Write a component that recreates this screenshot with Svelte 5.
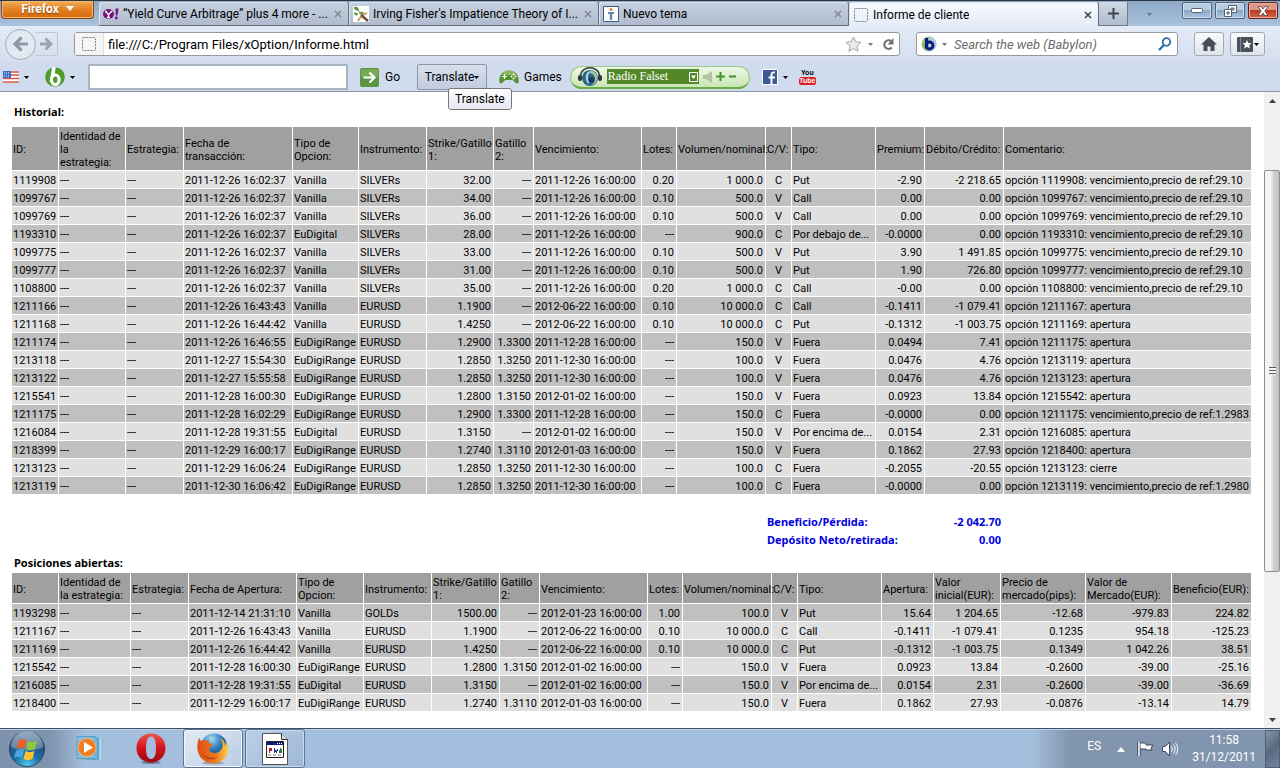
<script>
	let address = $state('file:///C:/Program Files/xOption/Informe.html');
	let station = $state('Radio Falset');

	const tabs = [
		{ title: '“Yield Curve Arbitrage” plus 4 more - ...', icon: 'yahoo' },
		{ title: "Irving Fisher's Impatience Theory of I...", icon: 'plant' },
		{ title: 'Nuevo tema', icon: 'person' },
		{ title: 'Informe de cliente', icon: 'blank', active: true }
	];

	// name, width, alignment; the last column takes what is left
	const historyColumns = [
		['ID:', 46, 'right'],
		['Identidad de\nla\nestrategia:', 66],
		['Estrategia:', 57],
		['Fecha de\ntransacción:', 108],
		['Tipo de\nOpcion:', 65],
		['Instrumento:', 67],
		['Strike/Gatillo\n1:', 66, 'right'],
		['Gatillo\n2:', 39, 'right'],
		['Vencimiento:', 107],
		['Lotes:', 34, 'right'],
		['Volumen/nominal:', 88, 'right'],
		['C/V:', 25, 'center'],
		['Tipo:', 83],
		['Premium:', 48, 'right'],
		['Débito/Crédito:', 78, 'right'],
		['Comentario:', null]
	];

	const history = `1119908|---|---|2011-12-26 16:02:37|Vanilla|SILVERs|32.00|---|2011-12-26 16:00:00|0.20|1 000.0|C|Put|-2.90|-2 218.65|opción 1119908: vencimiento,precio de ref:29.10
1099767|---|---|2011-12-26 16:02:37|Vanilla|SILVERs|34.00|---|2011-12-26 16:00:00|0.10|500.0|V|Call|0.00|0.00|opción 1099767: vencimiento,precio de ref:29.10
1099769|---|---|2011-12-26 16:02:37|Vanilla|SILVERs|36.00|---|2011-12-26 16:00:00|0.10|500.0|V|Call|0.00|0.00|opción 1099769: vencimiento,precio de ref:29.10
1193310|---|---|2011-12-26 16:02:37|EuDigital|SILVERs|28.00|---|2011-12-26 16:00:00|---|900.0|C|Por debajo de...|-0.0000|0.00|opción 1193310: vencimiento,precio de ref:29.10
1099775|---|---|2011-12-26 16:02:37|Vanilla|SILVERs|33.00|---|2011-12-26 16:00:00|0.10|500.0|V|Put|3.90|1 491.85|opción 1099775: vencimiento,precio de ref:29.10
1099777|---|---|2011-12-26 16:02:37|Vanilla|SILVERs|31.00|---|2011-12-26 16:00:00|0.10|500.0|V|Put|1.90|726.80|opción 1099777: vencimiento,precio de ref:29.10
1108800|---|---|2011-12-26 16:02:37|Vanilla|SILVERs|35.00|---|2011-12-26 16:00:00|0.20|1 000.0|C|Call|-0.00|0.00|opción 1108800: vencimiento,precio de ref:29.10
1211166|---|---|2011-12-26 16:43:43|Vanilla|EURUSD|1.1900|---|2012-06-22 16:00:00|0.10|10 000.0|C|Call|-0.1411|-1 079.41|opción 1211167: apertura
1211168|---|---|2011-12-26 16:44:42|Vanilla|EURUSD|1.4250|---|2012-06-22 16:00:00|0.10|10 000.0|C|Put|-0.1312|-1 003.75|opción 1211169: apertura
1211174|---|---|2011-12-26 16:46:55|EuDigiRange|EURUSD|1.2900|1.3300|2011-12-28 16:00:00|---|150.0|V|Fuera|0.0494|7.41|opción 1211175: apertura
1213118|---|---|2011-12-27 15:54:30|EuDigiRange|EURUSD|1.2850|1.3250|2011-12-30 16:00:00|---|100.0|V|Fuera|0.0476|4.76|opción 1213119: apertura
1213122|---|---|2011-12-27 15:55:58|EuDigiRange|EURUSD|1.2850|1.3250|2011-12-30 16:00:00|---|100.0|V|Fuera|0.0476|4.76|opción 1213123: apertura
1215541|---|---|2011-12-28 16:00:30|EuDigiRange|EURUSD|1.2800|1.3150|2012-01-02 16:00:00|---|150.0|V|Fuera|0.0923|13.84|opción 1215542: apertura
1211175|---|---|2011-12-28 16:02:29|EuDigiRange|EURUSD|1.2900|1.3300|2011-12-28 16:00:00|---|150.0|C|Fuera|-0.0000|0.00|opción 1211175: vencimiento,precio de ref:1.2983
1216084|---|---|2011-12-28 19:31:55|EuDigital|EURUSD|1.3150|---|2012-01-02 16:00:00|---|150.0|V|Por encima de...|0.0154|2.31|opción 1216085: apertura
1218399|---|---|2011-12-29 16:00:17|EuDigiRange|EURUSD|1.2740|1.3110|2012-01-03 16:00:00|---|150.0|V|Fuera|0.1862|27.93|opción 1218400: apertura
1213123|---|---|2011-12-29 16:06:24|EuDigiRange|EURUSD|1.2850|1.3250|2011-12-30 16:00:00|---|100.0|C|Fuera|-0.2055|-20.55|opción 1213123: cierre
1213119|---|---|2011-12-30 16:06:42|EuDigiRange|EURUSD|1.2850|1.3250|2011-12-30 16:00:00|---|100.0|C|Fuera|-0.0000|0.00|opción 1213119: vencimiento,precio de ref:1.2980`
		.split('\n')
		.map((line) => line.split('|'));

	const totals = [
		['Beneficio/Pérdida:', '-2 042.70'],
		['Depósito Neto/retirada:', '0.00']
	];

	const openColumns = [
		['ID:', 46, 'right'],
		['Identidad de\nla estrategia:', 71],
		['Estrategia:', 57],
		['Fecha de Apertura:', 107],
		['Tipo de\nOpcion:', 66],
		['Instrumento:', 67],
		['Strike/Gatillo\n1:', 67, 'right'],
		['Gatillo\n2:', 39, 'right'],
		['Vencimiento:', 107],
		['Lotes:', 34, 'right'],
		['Volumen/nominal:', 88, 'right'],
		['C/V:', 25, 'center'],
		['Tipo:', 83],
		['Apertura:', 51, 'right'],
		['Valor\ninicial(EUR):', 66, 'right'],
		['Precio de\nmercado(pips):', 84, 'right'],
		['Valor de\nMercado(EUR):', 85, 'right'],
		['Beneficio(EUR):', null, 'right']
	];

	const openPositions = `1193298|---|---|2011-12-14 21:31:10|Vanilla|GOLDs|1500.00|---|2012-01-23 16:00:00|1.00|100.0|V|Put|15.64|1 204.65|-12.68|-979.83|224.82
1211167|---|---|2011-12-26 16:43:43|Vanilla|EURUSD|1.1900|---|2012-06-22 16:00:00|0.10|10 000.0|C|Call|-0.1411|-1 079.41|0.1235|954.18|-125.23
1211169|---|---|2011-12-26 16:44:42|Vanilla|EURUSD|1.4250|---|2012-06-22 16:00:00|0.10|10 000.0|C|Put|-0.1312|-1 003.75|0.1349|1 042.26|38.51
1215542|---|---|2011-12-28 16:00:30|EuDigiRange|EURUSD|1.2800|1.3150|2012-01-02 16:00:00|---|150.0|V|Fuera|0.0923|13.84|-0.2600|-39.00|-25.16
1216085|---|---|2011-12-28 19:31:55|EuDigital|EURUSD|1.3150|---|2012-01-02 16:00:00|---|150.0|V|Por encima de...|0.0154|2.31|-0.2600|-39.00|-36.69
1218400|---|---|2011-12-29 16:00:17|EuDigiRange|EURUSD|1.2740|1.3110|2012-01-03 16:00:00|---|150.0|V|Fuera|0.1862|27.93|-0.0876|-13.14|14.79`
		.split('\n')
		.map((line) => line.split('|'));
</script>

{#snippet arrow()}
	<svg width="5" height="3" viewBox="0 0 5 3"><path d="M0 0h5L2.5 3z" fill="currentColor" /></svg>
{/snippet}

{#snippet favicon(name)}
	<svg width="16" height="16" viewBox="0 0 16 16">
		{#if name === 'yahoo'}
			<ellipse cx="5.5" cy="8" rx="5.5" ry="5" fill="#7b0f80" />
			<path d="M2.5 5.5l3 3 3-3M5.5 8.5v3M4 11.5h3M2 5.5h2M7.500 5.500h2" stroke="#fff" stroke-width="1.300" fill="none" />
			<path d="M12.500 2.500h3l-1 7h-1.700z" fill="#7b0f80" />
			<circle cx="13.300" cy="12" r="1.400" fill="#7b0f80" />
		{:else if name === 'plant'}
			<path fill="#fff" d="M0 0h16v16H0z" />
			<path d="M1 1c2-1 5 0 5 3-3 1-5 0-5-3zM6 7c2-2 4-1 5 0-1 2-4 2-5 0zM1 7c2-1 4 0 4 2-2 1-4 0-4-2z" fill="#5c9c3c" />
			<path d="M4 3l4 5" stroke="#6b8d3e" />
			<path d="M5 15c2-4 4-6 9-8" stroke="#c9a36e" stroke-width="2" fill="none" />
			<path d="M8 9l7 6" stroke="#764c32" stroke-width="2.500" />
		{:else if name === 'person'}
			<path d="M.5.5h15v15H.5z" fill="#fff" stroke="#3c5a90" />
			<circle cx="8" cy="3.500" r="1.500" fill="#e5803c" />
			<path d="M5 6h6v2H9.200v6H6.800V8H5z" fill="#6c86b4" />
		{:else}
			<rect x="1.500" y="1.500" width="13" height="13" rx="1" fill="none" stroke="#7b8087" stroke-dasharray="2 1" />
		{/if}
	</svg>
{/snippet}

{#snippet report(columns, rows, flip, sums)}
	<table class:flip>
		<colgroup>
			{#each columns as [name, width] (name + width)}
				<col style={width ? `width: ${width}px` : null} />
			{/each}
		</colgroup>
		<thead>
			<tr>
				{#each columns as [name]}
					<th scope="col">{name}</th>
				{/each}
			</tr>
		</thead>
		<tbody>
			{#each rows as row (row[0])}
				<tr>
					{#each row as cell, i}
						<td class={columns[i][2]}>{cell}</td>
					{/each}
				</tr>
			{/each}
		</tbody>
		{#if sums}
			<tfoot>
				<tr><td colspan="16">&nbsp;</td></tr>
				{#each sums as [label, value] (label)}
					<tr>
						<td colspan="11"></td>
						<th scope="row" colspan="3">{label}</th>
						<td class="right">{value}</td>
						<td></td>
					</tr>
				{/each}
			</tfoot>
		{/if}
	</table>
{/snippet}

<div class="desktop">
	<header class="titlebar">
		<button class="firefox">Firefox <svg width="8" height="5" viewBox="0 0 8 5"><path d="M0 0h8L4 5z" fill="#fff" /></svg></button>
		<nav class="tabs" aria-label="Tabs">
			{#each tabs as tab (tab.title)}
				<div class="tab" class:active={tab.active}>
					<button class="tab-title">{@render favicon(tab.icon)}<span>{tab.title}</span></button>
					<button class="tab-close" aria-label="Close tab">
						<svg width="8" height="8" viewBox="0 0 8 8"><path d="M1 1l6 6M7 1L1 7" stroke="currentColor" stroke-width="1.700" /></svg>
					</button>
				</div>
			{/each}
			<button class="new-tab" aria-label="New tab">
				<svg width="11" height="11" viewBox="0 0 11 11"><path d="M5.500 0v11M0 5.500h11" stroke="#3f464e" stroke-width="2" /></svg>
			</button>
			<button class="list-tabs" aria-label="List all tabs">{@render arrow()}</button>
		</nav>
		<div class="window-buttons">
			<button aria-label="Minimize"><svg width="12" height="6" viewBox="0 0 12 6"><rect x=".5" y=".5" width="11" height="4" rx="1" fill="#fff" stroke="#56606e" /></svg></button>
			<button aria-label="Restore">
				<svg width="13" height="12" viewBox="0 0 13 12" fill="#fff" stroke="#56606e">
					<path d="M4.500.5h8v7h-8z" /><path d="M7 3h3v2H7z" fill="#9db6d2" />
					<path d="M.5 4.500h7v7h-7z" /><path d="M3 7h2v2H3z" fill="#9db6d2" />
				</svg>
			</button>
			<button class="close" aria-label="Close">
				<svg width="12" height="10" viewBox="0 0 12 10"><path d="M1 .5h3L6 3 8 .5h3L7.800 5 11 9.500H8L6 7 4 9.500H1L4.200 5z" fill="#fff" stroke="#62403f" stroke-width=".8" /></svg>
			</button>
		</div>
	</header>

	<div class="navbar">
		<div class="history-buttons">
			<button class="back" aria-label="Back">
				<svg width="16" height="16" viewBox="0 0 16 16"><path d="M8.500 1.500L2 8l6.500 6.500M2.500 8H15" stroke="#9099a6" stroke-width="3.200" fill="none" /></svg>
			</button>
			<button class="forward" aria-label="Forward">
				<svg width="13" height="14" viewBox="0 0 13 14"><path d="M5.500 1.500L11 7l-5.500 5.500M0 7h10.500" stroke="#9aa5b4" stroke-width="3" fill="none" /></svg>
			</button>
		</div>
		<div class="box location">
			<span class="identity">{@render favicon('blank')}</span>
			<input type="text" aria-label="Address" bind:value={address} />
			<button aria-label="Bookmark this page">
				<svg width="17" height="16" viewBox="0 0 17 16"><path d="M8.500 1l2.200 4.800 5.300.6-4 3.600 1.100 5.200-4.600-2.600-4.600 2.600L5 10 1 6.400l5.300-.6z" fill="#ececec" stroke="#a4a4a4" /></svg>
			</button>
			<button class="dim" aria-label="Show history">{@render arrow()}</button>
			<button aria-label="Reload">
				<svg width="12" height="13" viewBox="0 0 12 13"><path d="M9.500 3.500A4.300 4.300 0 1 0 9.800 9.500" stroke="#6c7277" stroke-width="2" fill="none" /><path d="M11.500 0v6.500H5.500z" fill="#6c7277" /></svg>
			</button>
		</div>
		<div class="box search">
			<button aria-label="Search engine">
				<svg width="16" height="16" viewBox="0 0 16 16"><circle cx="8" cy="8" r="7.500" fill="#8cc46c" /><path d="M8 .5a7.500 7.500 0 0 1 0 15z" fill="#b4cbe8" /><path d="M5.500 2v10.500" stroke="#10187c" stroke-width="3" /><circle cx="8.500" cy="9.500" r="3.500" fill="none" stroke="#10187c" stroke-width="2.800" /></svg>
			</button>
			<span class="dim">{@render arrow()}</span>
			<input type="text" aria-label="Search" placeholder="Search the web (Babylon)" />
			<button aria-label="Go search">
				<svg width="14" height="14" viewBox="0 0 14 14"><circle cx="8.500" cy="5" r="3.800" fill="none" stroke="#2f6ba9" stroke-width="1.800" /><path d="M6 8l-5 5" stroke="#2f6ba9" stroke-width="2.400" /></svg>
			</button>
		</div>
		<button class="tool" aria-label="Home">
			<svg width="16" height="14" viewBox="0 0 16 14"><path d="M8 0l8 7.500h-2.500V14H9.500V9.500h-3V14h-4V7.500H0z" fill="#454e59" /></svg>
		</button>
		<button class="tool bookmarks" aria-label="Bookmarks">
			<svg width="16" height="15" viewBox="0 0 16 15"><rect width="16" height="15" rx="1" fill="#48535f" /><path d="M3.500 0v15" stroke="#7d8894" /><path d="M10 3l1.300 2.900 3.200.3-2.400 2.100.7 3.200L10 9.800l-2.800 1.700.7-3.200-2.400-2.100 3.200-.3z" fill="#fff" /></svg>
			{@render arrow()}
		</button>
	</div>

	<div class="toolbar">
		<button class="flag" aria-label="Language">
			<svg width="16" height="12" viewBox="0 0 16 12">
				<path fill="#fff" d="M0 0h16v12H0z" />
				<path d="M0 1h16M0 4h16M0 7.500h16M0 11h16" stroke="#d9534a" stroke-width="1.600" />
				<path fill="#3c6cc0" d="M0 0h8v7H0z" />
				<path d="M1 2h6M1 5h6" stroke="#fff" stroke-dasharray="1 1" />
			</svg>
			{@render arrow()}
		</button>
		<button class="babylon" aria-label="Babylon">
			<svg width="20" height="20" viewBox="0 0 20 20"><circle cx="10" cy="10" r="9.800" fill="#4e9c2b" /><path d="M9 0L6.500 15" stroke="#fff" stroke-width="3.600" /><ellipse cx="10.300" cy="12.800" rx="3.800" ry="4.800" fill="#4e9c2b" stroke="#fff" stroke-width="3.200" /></svg>
			{@render arrow()}
		</button>
		<input class="query" type="text" aria-label="Babylon search" />
		<button class="go">
			<svg width="19" height="19" viewBox="0 0 19 19"><rect width="19" height="19" rx="2" fill="#5b9540" /><path d="M1 1h17v8H1z" fill="#74aa54" /><path d="M3.500 9.500h11M9.500 4.500l5 5-5 5" stroke="#fff" stroke-width="2.200" fill="none" /></svg>
			Go
		</button>
		<div class="translate">
			<button aria-describedby="translate-tip">Translate{@render arrow()}</button>
			<div class="tooltip" id="translate-tip" role="tooltip">Translate</div>
		</div>
		<button class="games">
			<svg width="20" height="14" viewBox="0 0 20 14"><path d="M5 2c3-2 7-2 10 0 4 1 6 10 4 11-2 2-4-3-6-3H7c-2 0-4 5-6 3C-1 12 1 3 5 2z" fill="#55912f" /><path d="M5 2c3-2 7-2 10 0 1 1 2 2 2 3H3c0-1 1-2 2-3z" fill="#8bba66" /><path d="M5.500 4v5M3 6.500h5" stroke="#fff" stroke-width="1.200" /><g fill="#fff"><circle cx="14.500" cy="4.500" r="1" /><circle cx="14.500" cy="8.500" r="1" /><circle cx="12.500" cy="6.500" r="1" /><circle cx="16.500" cy="6.500" r="1" /></g></svg>
			Games
		</button>
		<div class="radio">
			<svg width="26" height="20" viewBox="0 0 26 20">
				<circle cx="13" cy="11" r="8" fill="#2f6580" /><path d="M13 3.500c4 0 7 3 7.500 7-.5 4-3 7-6.500 8 2-2 4-4 4-7s-2-5-6-6z" fill="#a4ca9b" />
				<path d="M12 5C9 8 9 13 12 16" stroke="#aad5ee" stroke-width="2.200" fill="none" /><circle cx="14.500" cy="13" r="3" fill="#173b66" />
				<path d="M3.500 9C4-2 22-2 22.500 9" stroke="#343b43" stroke-width="1.500" fill="none" />
				<rect x="1" y="8" width="4" height="6" rx="2" fill="#30343a" /><rect x="21" y="8" width="4" height="6" rx="2" fill="#30343a" />
			</svg>
			<span class="station">
				<select aria-label="Station" bind:value={station}><option>Radio Falset</option></select>
				<svg width="9" height="10" viewBox="0 0 9 10"><path d="M.5.5h8v9h-8z" fill="none" stroke="#fff" /><path d="M2 3.500h5L4.500 7z" fill="#fff" /></svg>
			</span>
			<button aria-label="Mute"><svg width="9" height="12" viewBox="0 0 9 12"><path d="M0 4h3l6-4v12L3 8H0z" fill="#b0c3a2" /></svg></button>
			<button aria-label="Volume up"><svg width="9" height="9" viewBox="0 0 9 9"><path d="M4.500 0v9M0 4.500h9" stroke="#45912b" stroke-width="2" /></svg></button>
			<button aria-label="Volume down"><svg width="7" height="9" viewBox="0 0 7 9"><path d="M0 4.500h7" stroke="#45912b" stroke-width="2" /></svg></button>
		</div>
		<button class="facebook" aria-label="Facebook">
			<svg width="16" height="16" viewBox="0 0 16 16"><path d="M.5.500h15v15H.500z" fill="#3b5795" stroke="#fff" /><path d="M13 3.500c-3-.5-3.500.5-3.500 3V15M6.500 8.500H13" stroke="#fff" stroke-width="2" fill="none" /></svg>
			{@render arrow()}
		</button>
		<a class="youtube" href="#youtube"><span>You</span><b>Tube</b></a>
	</div>

	<div class="viewport">
		<main>
			<h2>Historial:</h2>
			{@render report(historyColumns, history, false, totals)}
			<h2>Posiciones abiertas:</h2>
			{@render report(openColumns, openPositions, true)}
		</main>
		<div class="scrollbar">
			<button aria-label="Scroll up"><svg width="7" height="4" viewBox="0 0 7 4"><path d="M0 4h7L3.500 0z" fill="#3c4046" /></svg></button>
			<div class="before"></div>
			<div class="thumb"><i></i></div>
			<div class="after"></div>
			<button aria-label="Scroll down"><svg width="7" height="4" viewBox="0 0 7 4"><path d="M0 0h7L3.500 4z" fill="#3c4046" /></svg></button>
		</div>
	</div>

	<footer class="taskbar">
		<button class="start" aria-label="Start">
			<svg width="38" height="38" viewBox="0 0 38 38">
				<defs>
					<radialGradient id="orb" cx=".5" cy="1" r=".9"><stop offset="0" stop-color="#4fd0f2" /><stop offset=".45" stop-color="#1b6ba5" /><stop offset="1" stop-color="#25476d" /></radialGradient>
					<linearGradient id="orb-shine" x2="0" y2="1"><stop offset="0" stop-color="#d8e5ee" /><stop offset="1" stop-color="#7893aa" /></linearGradient>
				</defs>
				<circle cx="19" cy="19" r="17.500" fill="url(#orb)" stroke="#28476a" />
				<path d="M3 17a16 16 0 0 1 32 0c-9 5-23 5-32 0z" fill="url(#orb-shine)" opacity=".65" />
				<path d="M10.500 10.500c3-2 5.500-1.500 8 0l-2 8c-2.500-1.500-5-1.500-8 0z" fill="#ef5e27" />
				<path d="M20 11c3 1.500 5.500 1.500 9 0l-2 8c-3.500 1.500-6 1.500-9 0z" fill="#8ec63f" />
				<path d="M8 20.500c3-1.500 5.500-1.500 8 0l-2 7.500c-2.500-1.500-5-1.500-8 0z" fill="#49a5de" />
				<path d="M17.500 21c3 1.500 5.500 1.500 9 0l-2 8c-3.500 1.500-6 1.500-9 0z" fill="#fdc32b" />
			</svg>
		</button>
		<button aria-label="Windows Media Player">
			<svg width="30" height="27" viewBox="0 0 30 27"><path d="M7 2l18 1v22l-18-1z" fill="#5da9d2" /><path d="M5 1.500l17 1v22l-17-1z" fill="#9ccbe6" stroke="#559fc6" /><path d="M2 1.500h18v22H2z" fill="#86bcdc" stroke="#579fc5" /><path d="M25 3v22" stroke="#d9f0fa" /><circle cx="12" cy="12.500" r="9" fill="#ef7c21" stroke="#f7b274" /><path d="M9 7l9 5.500L9 18z" fill="#fff" /></svg>
		</button>
		<button class="opera" aria-label="Opera">
			<svg width="30" height="31" viewBox="0 0 30 31">
				<defs><linearGradient id="opera" x2="0" y2="1"><stop offset="0" stop-color="#ee564d" /><stop offset=".5" stop-color="#d3131b" /><stop offset="1" stop-color="#9c0a12" /></linearGradient></defs>
				<ellipse cx="15" cy="29.500" rx="10" ry="1.500" fill="#647b98" />
				<path fill-rule="evenodd" d="M15 .5C6 .5.500 7 .500 15S6 29.500 15 29.500 29.500 23 29.500 15 24 .5 15 .5zm0 3c4 0 5 6 5 11.500S19 26 15 26s-5-5.500-5-11S11 3.500 15 3.500z" fill="url(#opera)" />
			</svg>
		</button>
		<button class="task current" aria-label="Mozilla Firefox">
			<svg width="32" height="32" viewBox="0 0 32 32">
				<defs>
					<radialGradient id="globe" cx=".4" cy=".2" r=".8"><stop offset="0" stop-color="#9edcf3" /><stop offset=".5" stop-color="#2c79b8" /><stop offset="1" stop-color="#123763" /></radialGradient>
					<linearGradient id="fox" x1="0" x2="1"><stop offset="0" stop-color="#df4c16" /><stop offset=".6" stop-color="#ec7a1d" /><stop offset="1" stop-color="#fad047" /></linearGradient>
				</defs>
				<ellipse cx="16" cy="30" rx="11" ry="1.500" fill="#5c6e84" opacity=".5" />
				<circle cx="17" cy="14" r="13.500" fill="url(#globe)" />
				<path d="M2 5c1 1 1 2 2 3 2-1 4-1 5 0 2-1 3-2 4-2-1 1-2 3-1 4 2 1 4 1 4 2s-2 2-4 3c0 5 6 7 11 3 4-4 3-9 0-13 4 2 5 5 5 8 1-2 1-4 0-6 4 6 4 13 0 18-6 7-18 7-24 0C-1 19 0 10 2 5z" fill="url(#fox)" />
				<path d="M3 16c3 8 10 10 18 8-6 5-15 3-18-8z" fill="#c9441a" />
			</svg>
		</button>
		<button class="task" aria-label="xOption">
			<svg width="26" height="32" viewBox="0 0 26 32"><path d="M.5.5h19l6 6v25H.5z" fill="#fff" stroke="#555" /><path d="M19.500.5v6h6" fill="#ddd" stroke="#333" /><path d="M4.500 8.500h17v16h-17z" fill="#fff" stroke="#222" /><path d="M5 9h16v3H5z" fill="#101a83" /><path d="M15 10.500h5" stroke="#fff" stroke-dasharray="1 1" /><path d="M7 15h3v3H8v2H7z" fill="#b11e28" /><path d="M12 15h1v2h2v-1h1v2h-1v2h-1v-1h-1v1h-1z" fill="#2630b0" /><path d="M18 15h1v1h1v4h-3v-3h1z" fill="#218540" /><path d="M6 22h13" stroke="#777" stroke-dasharray="3 2" /></svg>
		</button>
		<div class="tray">
			<button class="lang">ES</button>
			<button aria-label="Show hidden icons"><svg width="8" height="5" viewBox="0 0 8 5"><path d="M0 5h8L4 0z" fill="#fff" /></svg></button>
			<button aria-label="Action Center"><svg width="17" height="16" viewBox="0 0 17 16"><path d="M2 1v14" stroke="#3c4859" stroke-width="3.500" /><path d="M3 2h6v2h7l-2 3 1 2H9V8H3z" fill="#fff" stroke="#3c4859" /><path d="M2 1v14" stroke="#fff" stroke-width="1.600" /></svg></button>
			<button aria-label="Volume"><svg width="16" height="16" viewBox="0 0 16 16"><path d="M.5 5.500h3l4-4.500v14l-4-4.500h-3z" fill="#fff" stroke="#3c4859" /><path d="M9.500 5.500c1 1 1 4 0 5M11.500 3.500c2 2 2 7 0 9M13.500 2c3 3 3 9 0 12" stroke="#fff" fill="none" /></svg></button>
			<button class="clock"><time datetime="2011-12-31T11:58"><span>11:58</span><span>31/12/2011</span></time></button>
			<button class="peek" aria-label="Show desktop"></button>
		</div>
	</footer>
</div>

<style>
	:global(body) {
		margin: 0;
	}
	.desktop {
		display: flex;
		flex-direction: column;
		min-height: 100vh;
		font: 12px/16px Roboto, 'Noto Sans', sans-serif;
		color: #000;
		background: #fff;
	}
	button,
	input,
	select {
		font: inherit;
		color: inherit;
		border: 0;
		padding: 0;
		margin: 0;
		background: none;
		box-sizing: border-box;
	}
	button {
		display: flex;
		align-items: center;
		justify-content: center;
		white-space: nowrap;
	}
	input:focus,
	select:focus {
		outline: none;
	}
	svg {
		display: block;
		flex: none;
	}

	/* title bar and tabs */
	.titlebar {
		display: flex;
		align-items: flex-start;
		height: 26px;
		box-sizing: border-box;
		border-top: 1px solid #2c3642;
		background: linear-gradient(#8ea9c6, #a9c2de);
	}
	.firefox {
		gap: 7px;
		width: 93px;
		height: 18px;
		margin: 0 5px 0 1px;
		padding-bottom: 2px;
		border: 1px solid #8b4413;
		border-top: 0;
		border-radius: 0 0 4px 4px;
		background: linear-gradient(#f2ae58, #e07a1b 60%, #d56c10);
		box-shadow: inset 0 0 0 1px #f4b970;
		color: #fff;
		font-weight: bold;
		text-shadow: 0 1px 1px #834107;
	}
	.tabs {
		display: flex;
		flex: 1;
		min-width: 0;
		height: 25px;
		padding-top: 1px;
		box-sizing: border-box;
	}
	.tab {
		display: flex;
		flex: 0 1 250px;
		min-width: 0;
		box-sizing: border-box;
		padding: 1px 6px 0 4px;
		border: 1px solid #616e7e;
		border-width: 0 1px 1px 0;
		border-radius: 3px 3px 0 0;
		box-shadow: inset 1px 1px #dbe3ed;
		background: linear-gradient(#c5d0df, #b0bccd);
	}
	.tab.active {
		border-bottom: 0;
		background: linear-gradient(#f8faff, #e5ecf8);
	}
	.tab-title {
		flex: 1;
		min-width: 0;
		justify-content: flex-start;
		gap: 4px;
	}
	.tab-title span {
		overflow: hidden;
	}
	.tab-close {
		color: #858c95;
	}
	.active .tab-close {
		color: #474d54;
	}
	.new-tab {
		width: 29px;
		border: 1px solid #6e7c8d;
		border-width: 0 1px 1px 0;
		background: linear-gradient(#d0d9e5, #b0bccc);
	}
	.list-tabs {
		width: 42px;
		color: #66717e;
	}
	.window-buttons {
		display: flex;
		gap: 3px;
		padding: 1px 2px 0 0;
	}
	.window-buttons button {
		width: 30px;
		height: 17px;
		border: 1px solid #50647c;
		border-radius: 2px;
		box-shadow: inset 0 0 0 1px #cbdcec;
		background: linear-gradient(#b5cce2 45%, #8aa9c9 50%, #a9c4de);
	}
	.window-buttons .close {
		border-color: #6a231c;
		box-shadow: inset 0 0 0 1px #e7aea2;
		background: linear-gradient(#dc9887 45%, #bb3c26 50%, #cd6a4d);
	}

	/* address bar */
	.navbar {
		display: flex;
		align-items: center;
		height: 36px;
		padding: 0 15px 0 5px;
		background: linear-gradient(#e4ebf7, #d4deee);
	}
	.history-buttons {
		display: flex;
		align-items: center;
		margin-right: 16px;
	}
	.back {
		width: 31px;
		height: 31px;
		border: 1px solid #a0a9b5;
		border-radius: 50%;
		background: #e3e9f2;
	}
	.forward {
		width: 22px;
		height: 24px;
		border: 1px solid #bec7d4;
		border-left: 0;
		border-radius: 0 3px 3px 0;
	}
	.box {
		display: flex;
		align-items: center;
		height: 24px;
		box-sizing: border-box;
		border: 1px solid #949aa4;
		border-radius: 3px;
		background: #fff;
		font-size: 13px;
	}
	.box input {
		flex: 1;
		min-width: 0;
		padding-top: 2px;
	}
	.dim {
		color: #777;
	}
	.location {
		flex: 1;
		padding-right: 5px;
	}
	.location input {
		padding-left: 4px;
	}
	.location .dim {
		margin: 0 9px 0 6px;
	}
	.identity {
		display: flex;
		align-items: center;
		height: 22px;
		padding: 0 6px;
		border-right: 1px solid #ddd;
		background: #f5f5f6;
	}
	.search {
		width: 262px;
		margin: 0 16px;
		padding: 0 5px 0 4px;
		gap: 5px;
	}
	.search input {
		padding-left: 2px;
	}
	.search input::placeholder {
		color: #6d6d6d;
		font-style: italic;
		opacity: 1;
	}
	.tool {
		width: 30px;
		height: 24px;
		border: 1px solid #a2a9b3;
		border-radius: 3px;
		background: linear-gradient(#f9fafc, #dfe4eb);
	}
	.bookmarks {
		width: 35px;
		margin-left: 6px;
		gap: 1px;
	}

	/* Babylon toolbar */
	.toolbar {
		display: flex;
		align-items: center;
		box-sizing: border-box;
		height: 30px;
		padding: 1px 3px 0;
		border-bottom: 1px solid #8f959e;
		background: #d0dcee;
	}
	.flag,
	.babylon,
	.facebook {
		gap: 5px;
	}
	.babylon {
		margin: 0 13px 0 16px;
	}
	.query {
		width: 260px;
		height: 26px;
		border: 2px solid #a7b6c0;
		background: #fff;
	}
	.go {
		gap: 6px;
		margin: 0 17px 0 12px;
	}
	.translate {
		position: relative;
		margin-right: 12px;
	}
	.translate > button {
		width: 70px;
		height: 26px;
		border: 1px solid #8b95a3;
		border-radius: 2px;
		background: linear-gradient(#d6dfed, #c1ccdd);
	}
	.tooltip {
		position: absolute;
		z-index: 2;
		top: 24px;
		left: 31px;
		padding: 2px 6px;
		border: 1px solid #767676;
		border-radius: 3px;
		background: linear-gradient(#fff, #e5e6f1);
	}
	.games {
		gap: 5px;
		margin-right: 8px;
	}
	.radio {
		display: flex;
		align-items: center;
		box-sizing: border-box;
		width: 180px;
		height: 23px;
		padding-left: 6px;
		gap: 4px;
		border: 1px solid #9cc987;
		border-bottom: 2px solid #67ad43;
		border-radius: 12px;
		background: linear-gradient(#edf7e5, #c8e6b5);
	}
	.station {
		display: flex;
		align-items: center;
		justify-content: space-between;
		width: 92px;
		height: 15px;
		box-sizing: border-box;
		padding: 0 1px;
		background: #538829;
	}
	.station select {
		flex: 1;
		appearance: none;
		color: #fff;
		font: 12px/15px 'Liberation Serif', serif;
	}
	.facebook {
		margin: 0 11px 0 12px;
	}
	.youtube {
		display: flex;
		flex-direction: column;
		align-items: center;
		width: 17px;
		color: #000;
		font: bold 7px/8px 'Liberation Sans', sans-serif;
		text-decoration: none;
	}
	.youtube b {
		width: 17px;
		text-align: center;
		border-radius: 2px;
		background: #dd1d20;
		color: #fff;
	}

	/* report */
	.viewport {
		display: flex;
		flex: 1;
	}
	main {
		flex: 1;
		min-width: 0;
		padding: 13px 12px 0 11px;
		font-size: 11px;
		line-height: 13px;
	}
	h2 {
		margin: 0;
		padding: 0 3px 8px;
		font: bold 11px/13px 'Noto Sans', sans-serif;
	}
	table + h2 {
		padding: 7px 3px 3px;
	}
	table {
		width: 100%;
		table-layout: fixed;
		border-spacing: 1px;
	}
	th,
	td {
		padding: 3px 1px 1px;
		white-space: pre;
		text-align: left;
		font-weight: normal;
	}
	thead th {
		background: #a0a0a0;
	}
	tbody tr {
		background: #e0e0e0;
	}
	tbody tr:nth-child(even),
	.flip tbody tr:nth-child(odd) {
		background: #c0c0c0;
	}
	.flip tbody tr:nth-child(even) {
		background: #e0e0e0;
	}
	td.right {
		padding-right: 2px;
		text-align: right;
	}
	td.center {
		text-align: center;
	}
	tfoot th,
	tfoot td {
		padding-top: 2px;
		padding-bottom: 2px;
		color: #0000e0;
		font-family: 'Noto Sans', sans-serif;
		font-weight: bold;
	}

	.scrollbar {
		display: flex;
		flex-direction: column;
		width: 16px;
		background: #f0f0f0;
	}
	.scrollbar button {
		height: 17px;
	}
	.before {
		flex: 61;
	}
	.thumb {
		display: flex;
		align-items: center;
		justify-content: center;
		flex: 402;
		box-sizing: border-box;
		border: 1px solid #8e8e90;
		border-radius: 2px;
		background: linear-gradient(90deg, #f5f5f5 40%, #d2d2d6 60%, #c0c0c6);
	}
	.thumb i {
		width: 7px;
		height: 8px;
		background: repeating-linear-gradient(#555b62 0 1px, #f5f5f5 1px 3px);
	}
	.after {
		flex: 139;
	}

	/* taskbar */
	.taskbar {
		display: flex;
		align-items: center;
		height: 39px;
		border-top: 1px solid #3e5068;
		box-shadow: inset 0 1px #bfd2e8;
		background: linear-gradient(90deg, #8093ae 50px, #a4bfdd 85px);
	}
	.start {
		margin: 0 29px 0 8px;
	}
	.opera {
		margin: 0 17px 0 31px;
	}
	.task {
		width: 60px;
		height: 39px;
		margin-right: 2px;
		border: 1px solid #5d7490;
		border-radius: 3px;
		box-shadow: inset 0 0 0 1px #c9dbee;
		background: linear-gradient(135deg, #bccfe6, #9cb7d6);
	}
	.task.current {
		box-shadow: inset 0 0 0 1px #f0f6fc;
		background: linear-gradient(135deg, #e3ebf5, #b9cbe1);
	}
	.tray {
		display: flex;
		align-items: center;
		height: 38px;
		margin: 1px 0 0 auto;
		padding-left: 55px;
		background: linear-gradient(90deg, transparent, #8295ae 38px);
		color: #fff;
	}
	.lang {
		margin: 0 16px 6px 0;
	}
	.tray svg {
		margin-right: 12px;
	}
	.tray button:nth-child(3) svg {
		margin-right: 8px;
	}
	.tray button:nth-child(4) svg {
		margin-right: 14px;
	}
	.clock {
		margin-right: 9px;
	}
	.clock span {
		display: block;
		line-height: 17px;
	}
	.peek {
		width: 15px;
		height: 38px;
		border: 1px solid #4c6078;
		background: linear-gradient(135deg, #8495aa, #56697f 50%, #7387a0);
	}
</style>
